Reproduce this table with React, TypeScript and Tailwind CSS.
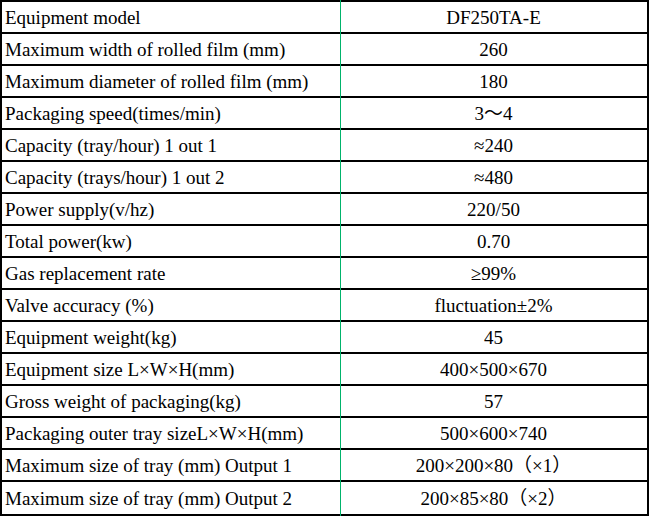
import React from 'react';

const rows: [string, string][] = [
    ['Equipment model', 'DF250TA-E'],
    ['Maximum width of rolled film (mm)', '260'],
    ['Maximum diameter of rolled film (mm)', '180'],
    ['Packaging speed(times/min)', '3～4'],
    ['Capacity (tray/hour) 1 out 1', '≈240'],
    ['Capacity (trays/hour) 1 out 2', '≈480'],
    ['Power supply(v/hz)', '220/50'],
    ['Total power(kw)', '0.70'],
    ['Gas replacement rate', '≥99%'],
    ['Valve accuracy (%)', 'fluctuation±2%'],
    ['Equipment weight(kg)', '45'],
    ['Equipment size L×W×H(mm)', '400×500×670'],
    ['Gross weight of packaging(kg)', '57'],
    ['Packaging outer tray sizeL×W×H(mm)', '500×600×740'],
    ['Maximum size of tray (mm) Output 1', '200×200×80（×1）'],
    ['Maximum size of tray (mm) Output 2', '200×85×80（×2）'],
];

const App: React.FC = () => {
    return (
        <div
            className="relative w-[649px] h-[516px] bg-white text-black text-[19px]"
            style={{ fontFamily: '"Liberation Serif", "Noto Sans CJK SC", serif' }}
        >
            <div className="w-[649px] border-2 border-black">
                {rows.map(([label, value], i) => (
                    <div
                        key={label}
                        className={`flex h-[32px] items-center ${i < rows.length - 1 ? 'border-b-2 border-black' : ''}`}
                    >
                        <div className="w-[338px] pl-[3px] leading-none">{label}</div>
                        <div className="flex-1 text-center leading-none">{value}</div>
                    </div>
                ))}
            </div>
            {/* green column divider */}
            <div className="absolute left-[340px] top-0 h-[516px] w-px bg-[#00b36b]" />
        </div>
    );
};

export default App;
